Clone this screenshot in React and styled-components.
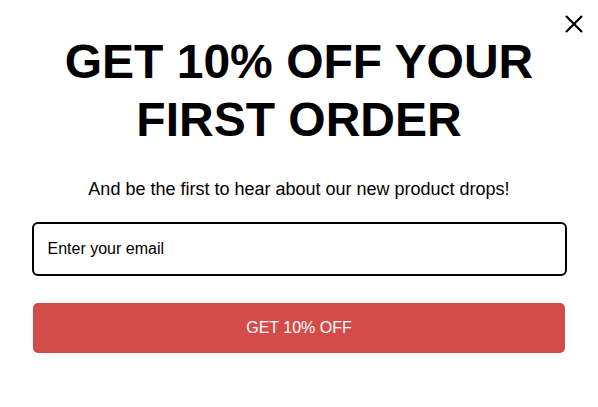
import React from "react";
import styled, { createGlobalStyle } from "styled-components";

const Global = createGlobalStyle`
  html, body { margin: 0; padding: 0; background: #fff; }
  body { font-family: "Liberation Sans", Arial, sans-serif; }
  * { box-sizing: border-box; }
`;

const Popup = styled.div`
  position: relative;
  width: 598px;
  height: 407px;
  background: #fff;
  padding: 33px 32px 0 32px;
  display: flex;
  flex-direction: column;
  align-items: center;
`;

const Close = styled.button`
  position: absolute;
  top: 13px;
  right: 13px;
  width: 22px;
  height: 22px;
  padding: 0;
  border: none;
  background: none;
  cursor: pointer;
  display: flex;
  align-items: center;
  justify-content: center;
`;

const Title = styled.h1`
  margin: 0;
  font-size: 48px;
  line-height: 58px;
  font-weight: 700;
  color: #000;
  text-align: center;
  width: 100%;
`;

const Subtitle = styled.p`
  margin: 29px 0 0 0;
  font-size: 18px;
  line-height: 22px;
  color: #000;
  text-align: center;
`;

const Input = styled.input`
  margin-top: 22px;
  width: 535px;
  height: 54px;
  border: 2px solid #000;
  border-radius: 6px;
  padding: 0 14px;
  font-family: "Liberation Sans", Arial, sans-serif;
  font-size: 16px;
  color: #000;
  outline: none;
  &::placeholder { color: #000; opacity: 1; }
`;

const Submit = styled.button`
  margin-top: 27px;
  width: 532px;
  height: 50px;
  border: none;
  border-radius: 5px;
  background: #d44c4a;
  color: #fff;
  font-family: "Liberation Sans", Arial, sans-serif;
  font-size: 16px;
  cursor: pointer;
`;

export default function App() {
  return (
    <>
      <Global />
      <Popup>
        <Close aria-label="Close">
          <svg width="18" height="18" viewBox="0 0 18 18">
            <path d="M1 1 L17 17 M17 1 L1 17" stroke="#000" strokeWidth="2.2" fill="none" />
          </svg>
        </Close>
        <Title>GET 10% OFF YOUR<br />FIRST ORDER</Title>
        <Subtitle>And be the first to hear about our new product drops!</Subtitle>
        <Input placeholder="Enter your email" />
        <Submit>GET 10% OFF</Submit>
      </Popup>
    </>
  );
}
